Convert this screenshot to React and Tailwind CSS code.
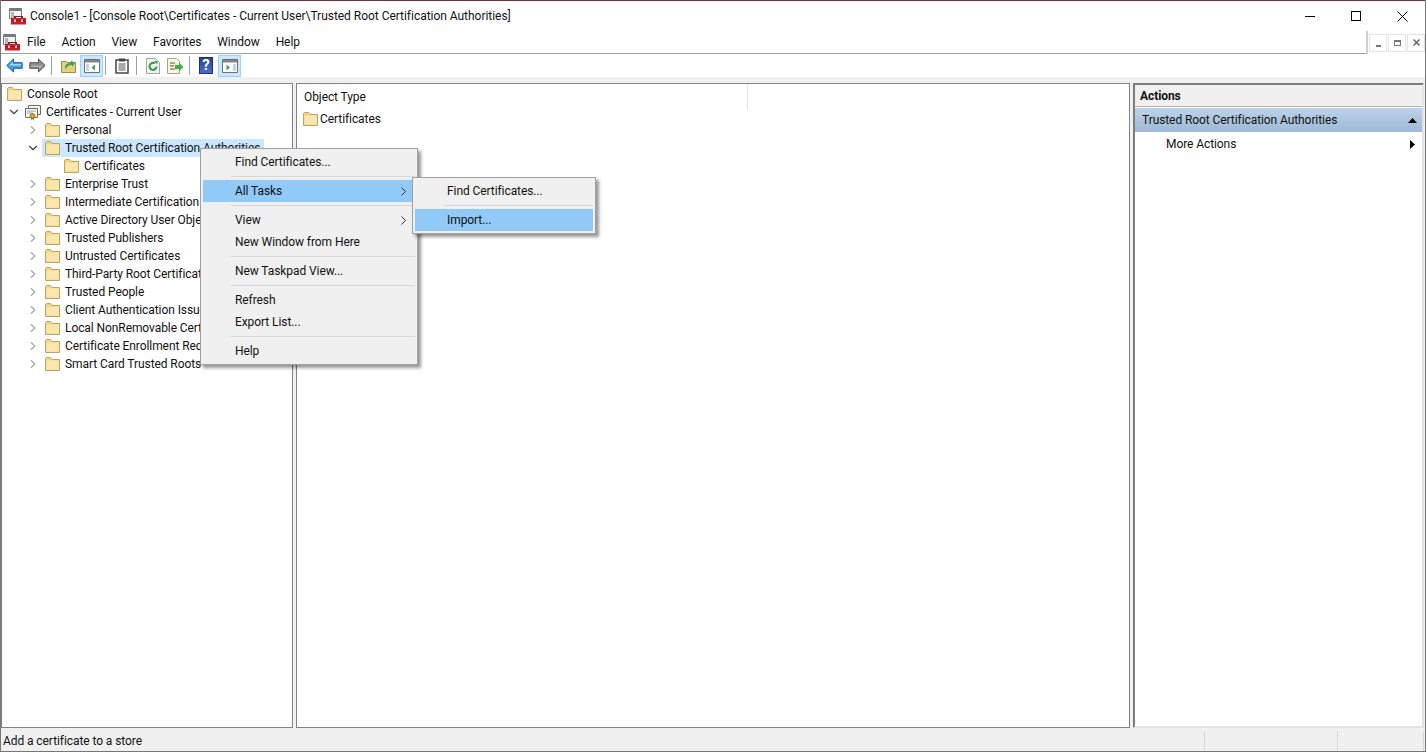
import { ChevronRight, ChevronDown } from "lucide-react";

const treeItems = [
  { label: "Personal" },
  { label: "Trusted Root Certification Authorities", open: true, selected: true },
  { label: "Certificates", child: true },
  { label: "Enterprise Trust" },
  { label: "Intermediate Certification Authorities" },
  { label: "Active Directory User Object" },
  { label: "Trusted Publishers" },
  { label: "Untrusted Certificates" },
  { label: "Third-Party Root Certification Authorities" },
  { label: "Trusted People" },
  { label: "Client Authentication Issuers" },
  { label: "Local NonRemovable Certificates" },
  { label: "Certificate Enrollment Requests" },
  { label: "Smart Card Trusted Roots" },
];

const Folder = () => (
  <svg width="15" height="14" viewBox="0 0 15 14" className="shrink-0">
    <path d="M.5 13.500V1.500l1-1h4l1.500 2h7.500v11z" fill="#f6d57e" stroke="#b9a469" />
    <path d="M1.500 3.500h12.500v9H1.500z" fill="#fbe7ae" />
  </svg>
);

const CertIcon = () => (
  <svg width="16" height="16" viewBox="0 0 16 16" className="shrink-0">
    <path d="M3.500 1.500h12v9h-12z" fill="#f4f1e6" stroke="#6b6b60" />
    <path d="M.5 4.500h12v9h-12z" fill="#fbfaf3" stroke="#6b6b60" />
    <path d="M2 7h9M2 9h6" stroke="#8aa4c4" />
    <circle cx="7.500" cy="12" r="2.500" fill="#e0a020" stroke="#a87414" />
    <path d="M6 14v2l1.500-1 1.500 1v-2" fill="#3d6fb0" />
  </svg>
);

const AppIcon = () => (
  <svg width="17" height="17" viewBox="0 0 17 17" className="shrink-0">
    <path d="M.5.5h12v10h-12z" fill="#f2f2f2" stroke="#777" />
    <path d="M1 1h11v2H1z" fill="#6f7a85" />
    <path d="M2 5h3M2 7h3M2 9h3" stroke="#777" />
    <path d="M2 10h15v6.500H2z" fill="#c8202a" />
    <path d="M5 8h9v2H5z" fill="#8a1a20" />
    <path d="M7 9h5v1H7z" fill="#f2f2f2" />
    <path d="M2 12h15v1H2z" fill="#8a1a20" />
    <path d="M5 11.500h2V14H5zM12 11.500h2V14h-2z" fill="#f3c4c4" />
  </svg>
);

const PanelIcon = ({ side }) => (
  <svg width="16" height="14" viewBox="0 0 16 14">
    <path d="M.5.5h15v13H.5z" fill="#fff" stroke="#6f6f6f" />
    <path d="M1 1h14v2.500H1z" fill="#7d8790" />
    {side === "left" ? (
      <>
        <path d="M2 5h3v7H2z" fill="#c8d4de" />
        <path d="M11 5.500v6L7.500 8.500z" fill="#36a852" />
      </>
    ) : (
      <>
        <path d="M11 5h3v7h-3z" fill="#c8d4de" />
        <path d="M4.500 5.500v6L8 8.500z" fill="#36a852" />
      </>
    )}
  </svg>
);

const Arrow = ({ dir, gray }) => (
  <svg width="17" height="15" viewBox="0 0 17 15" className={dir === "right" ? "rotate-180" : ""}>
    <path
      d="M.8 7.500 7.500 1v3.700h8.700v5.600H7.500V14z"
      fill={gray ? "#8b8b8b" : "#3f9fe8"}
      stroke={gray ? "#555" : "#14609f"}
    />
    <path d="M3 7.500 7 4v2h8v1.500z" fill={gray ? "#b5b5b5" : "#a8daf8"} />
  </svg>
);

const ToolSep = ({ className }) => <div className={`w-px h-[19px] bg-[#a0a0a0] ${className}`} />;

const MenuItem = ({ label, sub, active }) => (
  <div className={`h-[22px] flex items-center pl-8 pr-[9px] justify-between ${active ? "bg-[#91c9f7]" : ""}`}>
    <span>{label}</span>
    {sub && (
      <svg width="5" height="9" viewBox="0 0 5 9">
        <path d="M.5.5 4.500 4.500.5 8.500" fill="none" stroke="#333" />
      </svg>
    )}
  </div>
);

const MenuSep = () => (
  <div className="h-[7px] flex items-center pl-7">
    <div className="h-px w-full bg-[#d7d7d7]" />
  </div>
);

export default function App() {
  return (
    <div
      className="relative h-screen w-full overflow-hidden flex flex-col bg-white text-[12px] tracking-[-0.08px] text-[#111] border-x border-[#777]"
      style={{ fontFamily: 'Roboto, sans-serif' }}
    >
      {/* title bar */}
      <div className="h-[31px] shrink-0 flex items-center border-t border-[#7a2e36] pl-[8px]">
        <AppIcon />
        <span className="ml-[4px] tracking-[-0.03px]">Console1 - [Console Root\Certificates - Current User\Trusted Root Certification Authorities]</span>
        <div className="ml-auto flex items-center text-black">
          <div className="w-[46px] flex justify-center">
            <div className="w-[10px] h-px bg-black" />
          </div>
          <div className="w-[46px] flex justify-center">
            <div className="w-[10px] h-[10px] border border-black" />
          </div>
          <div className="w-[46px] flex justify-center">
            <svg width="11" height="11" viewBox="0 0 11 11">
              <path d="M.5.5l10 10M10.500.5l-10 10" stroke="#000" />
            </svg>
          </div>
        </div>
      </div>

      {/* menu bar */}
      <div className="h-[23px] shrink-0 flex items-center border-b border-[#a0a0a0] pl-[2px] relative">
        <AppIcon />
        <div className="flex ml-[7px] gap-[16px]">
          <span>File</span>
          <span>Action</span>
          <span>View</span>
          <span>Favorites</span>
          <span>Window</span>
          <span>Help</span>
        </div>
        <div className="ml-auto h-[23px] flex items-center gap-[1px] border-l-2 border-[#d0d0d0] bg-white pl-[1px] mb-[-1px]">
          <div className="w-[18px] h-[18px] border border-[#e4e4e4] flex items-end justify-center pb-[4px]">
            <div className="w-[5px] h-[2px] bg-[#777]" />
          </div>
          <div className="w-[18px] h-[18px] border border-[#e4e4e4] flex items-center justify-center">
            <div className="w-[7px] h-[6px] border border-[#777] border-t-2" />
          </div>
          <div className="w-[18px] h-[18px] border border-[#e4e4e4] flex items-center justify-center">
            <svg width="7" height="7" viewBox="0 0 7 7">
              <path d="M.5.5l6 6M6.500.5l-6 6" stroke="#666" strokeWidth="1.500" />
            </svg>
          </div>
        </div>
      </div>

      {/* toolbar */}
      <div className="h-[23px] shrink-0 flex items-center pl-[5px]">
        <Arrow dir="left" />
        <div className="ml-[6px]"><Arrow dir="right" gray /></div>
        <ToolSep className="ml-[5px]" />
        <svg width="16" height="15" viewBox="0 0 16 15" className="ml-[9px]">
          <path d="M.5 14.500V3.500h5l1 1h8v10z" fill="#e9cf7c" stroke="#9a8a4c" />
          <path d="M4 10c0-4 3-5 6-5V2.500L14 5l-3 4V7c-3 0-5 1-6 4z" fill="#3aa655" />
        </svg>
        <div className="ml-[3px] w-[23px] h-[22px] bg-[#cce8ff] border border-[#99d1ff] flex items-center justify-center">
          <PanelIcon side="left" />
        </div>
        <ToolSep className="ml-[2px]" />
        <svg width="14" height="16" viewBox="0 0 14 16" className="ml-[9px]">
          <path d="M1 2h12v13H1z" fill="#fff" stroke="#444" strokeWidth="1.500" />
          <path d="M4 .5h6v3H4z" fill="#444" />
          <path d="M3.500 6h7M3.500 8h7M3.500 10h7M3.500 12h7" stroke="#555" />
        </svg>
        <ToolSep className="ml-[7px]" />
        <svg width="14" height="16" viewBox="0 0 14 16" className="ml-[9px]">
          <path d="M.5.5h9l4 4v11H.5z" fill="#f3f3f3" stroke="#a5a5a5" />
          <path d="M10.500 8.500a3.500 3.500 0 1 1-1.500-3" fill="none" stroke="#2c9e3c" strokeWidth="2" />
          <path d="M8 3h3.500v3.500z" fill="#2c9e3c" />
        </svg>
        <svg width="17" height="16" viewBox="0 0 17 16" className="ml-[7px]">
          <path d="M.5.5h9l3 3v12H.5z" fill="#fbf6dc" stroke="#a9a286" />
          <path d="M3 5h5M3 8h4M3 11h5" stroke="#555" />
          <path d="M8 7h4V4.500L16.500 9 12 13.500V11H8z" fill="#3fb14a" />
        </svg>
        <ToolSep className="ml-[5px]" />
        <div className="ml-[9px] w-[14px] h-[17px] bg-gradient-to-b from-[#2a429c] to-[#4a6fc8] border border-[#1d2f78] flex items-center justify-center text-white font-bold text-[15px] leading-none">
          ?
        </div>
        <div className="ml-[5px] w-[23px] h-[22px] bg-[#cce8ff] border border-[#99d1ff] flex items-center justify-center">
          <PanelIcon side="right" />
        </div>
      </div>

      <div className="h-[6px] shrink-0 bg-[#f0f0f0]" />

      {/* panes */}
      <div className="flex-1 min-h-0 flex gap-[3px] pr-[1px] bg-[#f0f0f0]">
        {/* tree */}
        <div className="w-[292px] shrink-0 bg-white border border-[#828282] overflow-hidden pt-[1px]">
          <div className="h-[18px] flex items-center pl-[5px] gap-[5px]">
            <Folder />
            <span>Console Root</span>
          </div>
          <div className="h-[18px] flex items-center pl-[5px]">
            <ChevronDown size={14} strokeWidth={2} className="text-[#444] shrink-0" />
            <span className="ml-[4px]"><CertIcon /></span>
            <span className="ml-[5px]">Certificates - Current User</span>
          </div>
          {treeItems.map((item) =>
            item.child ? (
              <div key={item.label} className="h-[18px] flex items-center pl-[62px] gap-[5px]">
                <Folder />
                <span>{item.label}</span>
              </div>
            ) : (
              <div key={item.label} className="h-[18px] flex items-center pl-[24px]">
                {item.open ? (
                  <ChevronDown size={14} strokeWidth={2} className="text-[#444] shrink-0" />
                ) : (
                  <ChevronRight size={14} strokeWidth={2} className="text-[#a6a6a6] shrink-0" />
                )}
                <div className={`ml-[2px] flex items-center gap-[5px] h-[18px] pl-[3px] pr-[4px] whitespace-nowrap ${item.selected ? "bg-[#cce8ff]" : ""}`}>
                  <Folder />
                  <span>{item.label}</span>
                </div>
              </div>
            )
          )}
        </div>

        {/* result list */}
        <div className="flex-1 min-w-0 bg-white border border-[#828282]">
          <div className="h-[26px] flex items-center">
            <div className="w-[451px] h-full flex items-center pl-[7px] border-r border-[#e5e5e5]">Object Type</div>
          </div>
          <div className="h-[18px] flex items-center pl-[6px] gap-[2px]">
            <Folder />
            <span>Certificates</span>
          </div>
        </div>

        {/* actions */}
        <div className="w-[291px] shrink-0 bg-white border-t-2 border-l-2 border-[#7d7d7d] border-r-2 border-r-[#e3e3e3] border-b-2 border-b-[#e3e3e3]">
          <div className="h-[22px] flex items-center pl-[5px] font-bold bg-[#f0f0f0] border-b border-[#b4b4b4]">Actions</div>
          <div className="h-[25px] flex items-center justify-between pl-[7px] pr-[5px] bg-gradient-to-b from-[#bcd3ea] to-[#9fb9d6] border-t border-white">
            <span>Trusted Root Certification Authorities</span>
            <svg width="9" height="5" viewBox="0 0 9 5">
              <path d="M0 5 4.500 0 9 5z" fill="#000" />
            </svg>
          </div>
          <div className="h-[24px] flex items-center justify-between pl-[31px] pr-[7px]">
            <span>More Actions</span>
            <svg width="5" height="9" viewBox="0 0 5 9">
              <path d="M0 0l5 4.500L0 9z" fill="#000" />
            </svg>
          </div>
        </div>
      </div>

      {/* status bar */}
      <div className="h-[24px] shrink-0 flex items-center bg-[#f0f0f0] border-b border-[#777] pt-[2px] pl-[2px] pr-[1px]">
        <span className="flex-1">Add a certificate to a store</span>
        <div className="w-[133px] h-[20px] border-l border-[#d7d7d7]" />
        <div className="w-[87px] h-[20px] border-x border-[#d7d7d7]" />
      </div>

      {/* context menu */}
      <div className="absolute left-[199px] top-[148px] w-[218px] h-[217px] bg-[#f0f0f0] border border-[#a0a0a0] p-[2px] shadow-[3px_3px_3px_rgba(0,0,0,0.4)]">
        <MenuItem label="Find Certificates..." />
        <MenuSep />
        <MenuItem label="All Tasks" sub active />
        <MenuSep />
        <MenuItem label="View" sub />
        <MenuItem label="New Window from Here" />
        <MenuSep />
        <MenuItem label="New Taskpad View..." />
        <MenuSep />
        <MenuItem label="Refresh" />
        <MenuItem label="Export List..." />
        <MenuSep />
        <MenuItem label="Help" />
      </div>

      {/* submenu */}
      <div className="absolute left-[411px] top-[177px] w-[184px] h-[57px] bg-[#f0f0f0] border border-[#a0a0a0] p-[2px] shadow-[3px_3px_3px_rgba(0,0,0,0.4)]">
        <MenuItem label="Find Certificates..." />
        <MenuSep />
        <MenuItem label="Import..." active />
      </div>
    </div>
  );
}
